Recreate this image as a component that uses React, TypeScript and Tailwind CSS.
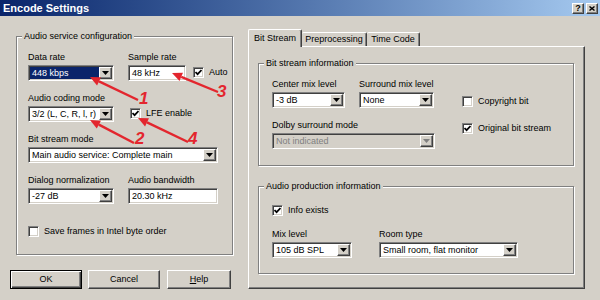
import React from 'react';

// Win2000 스타일 테두리
const sunken =
  'border border-t-[#808080] border-l-[#808080] border-b-white border-r-white shadow-[inset_1px_1px_0_#404040,inset_-1px_-1px_0_#d4d0c8]';
const raised =
  'border border-t-white border-l-white border-b-[#404040] border-r-[#404040] shadow-[inset_-1px_-1px_0_#808080]';

const DownArrow = ({ color = '#000' }: { color?: string }) => (
  <svg width="7" height="4" viewBox="0 0 7 4">
    <polygon points="0,0 7,0 3.5,4" fill={color} />
  </svg>
);

interface SelectProps {
  value: string;
  className: string;
  selected?: boolean;
  disabled?: boolean;
}

const Select: React.FC<SelectProps> = ({ value, className, selected, disabled }) => (
  <div className={`flex h-[16px] p-[1px] ${disabled ? 'bg-[#d4d0c8]' : 'bg-white'} ${sunken} ${className}`}>
    <div
      className={`flex-1 px-[2px] leading-[12px] whitespace-nowrap overflow-hidden ${
        selected ? 'bg-[#0a246a] text-white' : ''
      } ${disabled ? 'text-[#808080]' : ''}`}
    >
      {value}
    </div>
    <div className={`w-[13px] h-[12px] flex items-center justify-center bg-[#d4d0c8] ${raised}`}>
      <DownArrow color={disabled ? '#808080' : '#000'} />
    </div>
  </div>
);

const TextInput = ({ value, className }: { value: string; className: string }) => (
  <div className={`h-[16px] p-[1px] bg-white ${sunken} ${className}`}>
    <div className="px-[2px] leading-[12px]">{value}</div>
  </div>
);

const Field = ({ label, children, className = '' }: { label: string; children: React.ReactNode; className?: string }) => (
  <div className={className}>
    <div className="h-[11px] leading-[11px] whitespace-nowrap">{label}</div>
    <div className="mt-[2px]">{children}</div>
  </div>
);

const Checkbox = ({ label, checked, className = '' }: { label: string; checked?: boolean; className?: string }) => (
  <div className={`flex items-center h-[13px] ${className}`}>
    <div className={`w-[11px] h-[11px] bg-white flex items-center justify-center ${sunken}`}>
      {checked && (
        <svg width="7" height="7" viewBox="0 0 7 7">
          <polyline points="0.5,3 2.6,5.2 6.5,1" fill="none" stroke="#000" strokeWidth="1.7" />
        </svg>
      )}
    </div>
    <span className="ml-[5px] leading-[11px] whitespace-nowrap">{label}</span>
  </div>
);

const Group = ({ title, className, children }: { title: string; className: string; children: React.ReactNode }) => (
  <div className={`relative border border-[#808080] shadow-[inset_1px_1px_0_#fff,1px_1px_0_#fff] ${className}`}>
    <span className="absolute -top-[6px] left-[5px] bg-[#d4d0c8] px-[2px] leading-[11px]">{title}</span>
    {children}
  </div>
);

const Button = ({ children, primary, className }: { children: React.ReactNode; primary?: boolean; className: string }) => (
  <div
    className={`h-[19px] flex items-center justify-center bg-[#d4d0c8] ${
      primary
        ? 'border border-black shadow-[inset_1px_1px_0_#fff,inset_-1px_-1px_0_#404040,inset_-2px_-2px_0_#808080]'
        : raised
    } ${className}`}
  >
    {children}
  </div>
);

// 빨간 화살표 + 번호
const arrows = [
  { n: '1', from: [138, 100], to: [90, 77], tx: 139, ty: 104 },
  { n: '2', from: [134, 143], to: [90, 120], tx: 135, ty: 144 },
  { n: '3', from: [218, 92], to: [172, 73], tx: 217, ty: 97 },
  { n: '4', from: [188, 142], to: [138, 118], tx: 188, ty: 144 },
];

const Arrows = () => (
  <svg className="absolute inset-0 pointer-events-none" width="600" height="300">
    {arrows.map((a) => {
      const [x1, y1] = a.from;
      const [x2, y2] = a.to;
      const len = Math.hypot(x2 - x1, y2 - y1);
      const dx = (x2 - x1) / len;
      const dy = (y2 - y1) / len;
      const bx = x2 - dx * 10;
      const by = y2 - dy * 10;
      const head = `${x2},${y2} ${bx - dy * 4.5},${by + dx * 4.5} ${bx + dy * 4.5},${by - dx * 4.5}`;
      return (
        <g key={a.n}>
          <line x1={x1} y1={y1} x2={bx} y2={by} stroke="#e3262e" strokeWidth="2.4" />
          <polygon points={head} fill="#e3262e" />
          <text
            x={a.tx}
            y={a.ty}
            fill="#e3262e"
            fontSize="17"
            fontWeight="bold"
            fontStyle="italic"
            fontFamily="'Liberation Sans', Arial, sans-serif"
          >
            {a.n}
          </text>
        </g>
      );
    })}
  </svg>
);

export default function App() {
  return (
    <div className="relative w-[600px] h-[300px] overflow-hidden bg-[#d4d0c8] text-black text-[9px] leading-[11px] font-['Liberation_Sans',Arial,sans-serif]">
      {/* 타이틀 바 */}
      <div className="h-[16px] flex items-center justify-between pl-[3px] pr-[2px] bg-linear-to-r from-[#0a246a] to-[#a6caf0]">
        <span className="text-[11px] leading-[16px] font-bold text-white">Encode Settings</span>
        <div className="flex gap-[2px]">
          <div className={`w-[12px] h-[11px] flex items-center justify-center bg-[#d4d0c8] text-[9px] font-bold leading-[9px] ${raised}`}>
            ?
          </div>
          <div className={`w-[12px] h-[11px] flex items-center justify-center bg-[#d4d0c8] ${raised}`}>
            <svg width="6" height="5" viewBox="0 0 6 5">
              <path d="M0.5 0.5 L5.5 4.5 M5.5 0.5 L0.5 4.5" stroke="#000" strokeWidth="1.4" />
            </svg>
          </div>
        </div>
      </div>

      <div className="flex">
        {/* 왼쪽: 오디오 서비스 설정 */}
        <div className="w-[248px] pl-[10px]">
          <Group title="Audio service configuration" className="ml-[6px] mt-[20px] w-[217px] h-[219px] pt-[15px] pl-[11px]">
            <div className="flex items-end">
              <Field label="Data rate">
                <Select value="448 kbps" className="w-[86px]" selected />
              </Field>
              <Field label="Sample rate" className="ml-[14px]">
                <TextInput value="48 kHz" className="w-[58px]" />
              </Field>
              <Checkbox label="Auto" checked className="ml-[7px] mb-[2px]" />
            </div>
            <div className="flex items-end mt-[12px]">
              <Field label="Audio coding mode">
                <Select value="3/2 (L, C, R, l, r)" className="w-[86px]" />
              </Field>
              <Checkbox label="LFE enable" checked className="ml-[16px] mb-[2px]" />
            </div>
            <Field label="Bit stream mode" className="mt-[12px]">
              <Select value="Main audio service: Complete main" className="w-[190px]" />
            </Field>
            <div className="flex mt-[12px]">
              <Field label="Dialog normalization">
                <Select value="-27 dB" className="w-[86px]" />
              </Field>
              <Field label="Audio bandwidth" className="ml-[14px]">
                <TextInput value="20.30 kHz" className="w-[90px]" />
              </Field>
            </div>
            <Checkbox label="Save frames in Intel byte order" className="mt-[21px]" />
          </Group>

          <div className="flex mt-[15px]">
            <Button primary className="w-[72px]">OK</Button>
            <Button className="w-[72px] ml-[6px]">Cancel</Button>
            <Button className="w-[64px] ml-[7px]">
              <span>
                <span className="underline">H</span>elp
              </span>
            </Button>
          </div>
        </div>

        {/* 오른쪽: 탭 */}
        <div className="mt-[13px]">
          <div className="flex items-end h-[17px]">
            <div className="relative z-10 -mb-[1px] h-[18px] w-[54px] flex items-center justify-center bg-[#d4d0c8] rounded-t-[2px] border-t border-l border-r border-t-white border-l-white border-r-[#404040] shadow-[inset_-1px_0_0_#808080]">
              Bit Stream
            </div>
            <div className="h-[14px] w-[65px] flex items-center justify-center rounded-t-[2px] border-t border-r border-t-white border-r-[#404040] shadow-[inset_-1px_0_0_#808080]">
              Preprocessing
            </div>
            <div className="h-[14px] w-[53px] flex items-center justify-center rounded-t-[2px] border-t border-r border-t-white border-r-[#404040] shadow-[inset_-1px_0_0_#808080]">
              Time Code
            </div>
          </div>
          <div className={`w-[337px] h-[243px] pt-[16px] pl-[9px] ${raised}`}>
            <Group title="Bit stream information" className="w-[316px] h-[103px] pt-[15px] pl-[13px]">
              <div className="flex">
                <div className="w-[163px]">
                  <div className="flex">
                    <Field label="Center mix level">
                      <Select value="-3 dB" className="w-[73px]" />
                    </Field>
                    <Field label="Surround mix level" className="ml-[14px]">
                      <Select value="None" className="w-[75px]" />
                    </Field>
                  </div>
                  <Field label="Dolby surround mode" className="mt-[12px]">
                    <Select value="Not indicated" className="w-[163px]" disabled />
                  </Field>
                </div>
                <div className="ml-[27px]">
                  <Checkbox label="Copyright bit" className="mt-[16px]" />
                  <Checkbox label="Original bit stream" checked className="mt-[14px]" />
                </div>
              </div>
            </Group>

            <Group title="Audio production information" className="w-[316px] h-[88px] mt-[20px] pt-[17px] pl-[13px]">
              <Checkbox label="Info exists" checked />
              <div className="flex mt-[12px]">
                <Field label="Mix level">
                  <Select value="105 dB SPL" className="w-[80px]" />
                </Field>
                <Field label="Room type" className="ml-[27px]">
                  <Select value="Small room, flat monitor" className="w-[139px]" />
                </Field>
              </div>
            </Group>
          </div>
        </div>
      </div>

      <Arrows />
    </div>
  );
}
